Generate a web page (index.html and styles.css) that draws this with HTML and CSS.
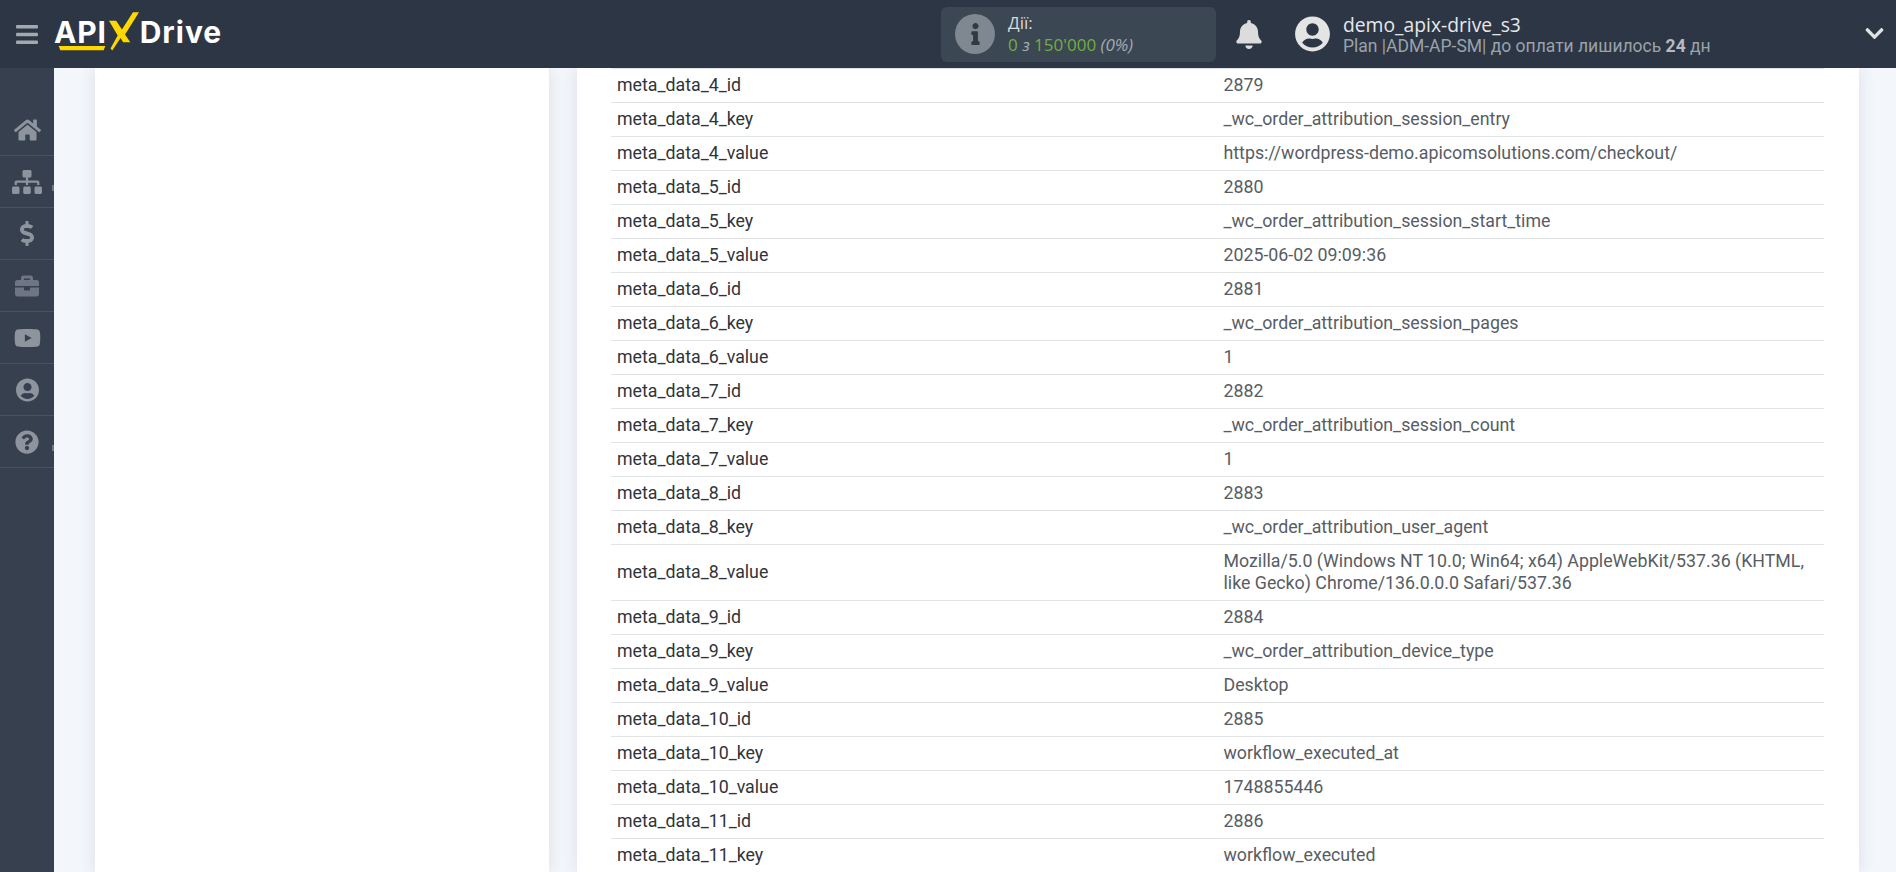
FILE: index.html
```html
<!DOCTYPE html>
<html lang="uk">
<head>
<meta charset="utf-8">
<title>ApiX-Drive</title>
<link rel="stylesheet" href="styles.css">
</head>
<body>
<header class="topbar">
  <button class="burger" aria-label="Меню"><svg viewBox="0 0 448 512"><path d="M16 132h416c8.837 0 16-7.163 16-16V76c0-8.837-7.163-16-16-16H16C7.163 60 0 67.163 0 76v40c0 8.837 7.163 16 16 16zm0 160h416c8.837 0 16-7.163 16-16v-40c0-8.837-7.163-16-16-16H16c-8.837 0-16 7.163-16 16v40c0 8.837 7.163 16 16 16zm0 160h416c8.837 0 16-7.163 16-16v-40c0-8.837-7.163-16-16-16H16c-8.837 0-16 7.163-16 16v40c0 8.837 7.163 16 16 16z"/></svg></button>
  <div class="logo">
    <span class="logo-api">API</span>
    <svg class="logo-x" viewBox="0 0 32 40"><path d="M1 9h7.4L14.4 18 25.8 0H32L17.6 23 23 31h-7.4L13 26.6 4.4 39.5 2.6 37.6 10 24z"/></svg>
    <span class="logo-drive">Drive</span>
    <svg class="logo-line" viewBox="0 0 56 6"><path d="M0 0h56l-2 5H2z"/></svg>
  </div>
  <div class="actions">
    <span class="actions-icon"><svg viewBox="0 0 192 512"><path d="M20 424.229h20V279.771H20c-11.046 0-20-8.954-20-20V212c0-11.046 8.954-20 20-20h112c11.046 0 20 8.954 20 20v212.229h20c11.046 0 20 8.954 20 20V492c0 11.046-8.954 20-20 20H20c-11.046 0-20-8.954-20-20v-47.771c0-11.046 8.954-20 20-20zM96 0C56.235 0 24 32.235 24 72s32.235 72 72 72 72-32.235 72-72S135.764 0 96 0z"/></svg></span>
    <div class="actions-text">
      <div class="actions-title">Дії:</div>
      <div class="actions-count"><span class="green">0</span> <i>з</i> <span class="green">150'000</span> <i>(0%)</i></div>
    </div>
  </div>
  <svg class="bell" viewBox="0 0 448 512"><path d="M224 512c35.32 0 63.97-28.65 63.97-64H160.03c0 35.35 28.65 64 63.97 64zm215.39-149.71c-19.32-20.76-55.47-51.99-55.47-154.29 0-77.7-54.48-139.9-127.94-155.16V32c0-17.67-14.32-32-31.98-32s-31.98 14.33-31.98 32v20.84C118.56 68.1 64.08 130.3 64.08 208c0 102.3-36.15 133.53-55.47 154.29-6 6.45-8.66 14.16-8.61 21.71.11 16.4 12.98 32 32.1 32h383.8c19.12 0 32-15.6 32.1-32 .05-7.55-2.61-15.27-8.61-21.71z"/></svg>
  <svg class="avatar" viewBox="0 0 496 512"><path d="M248 8C111 8 0 119 0 256s111 248 248 248 248-111 248-248S385 8 248 8zm0 96c48.6 0 88 39.4 88 88s-39.4 88-88 88-88-39.4-88-88 39.4-88 88-88zm0 344c-58.7 0-111.3-26.6-146.5-68.2 18.8-35.4 55.6-59.8 98.5-59.8 2.4 0 4.8.4 7.1 1.1 13 4.2 26.6 6.9 40.9 6.9 14.3 0 28-2.7 40.9-6.9 2.3-.7 4.7-1.1 7.1-1.1 42.9 0 79.7 24.4 98.5 59.8C359.3 421.4 306.7 448 248 448z"/></svg>
  <div class="user">
    <div class="user-name">demo_apix-drive_s3</div>
    <div class="user-plan">Plan |ADM-AP-SM| до оплати лишилось <b>24</b> дн</div>
  </div>
  <svg class="chevron" viewBox="0 0 448 512"><path d="M207.029 381.476L12.686 187.132c-9.373-9.373-9.373-24.569 0-33.941l22.667-22.667c9.357-9.357 24.522-9.375 33.901-.04L224 284.505l154.745-154.021c9.379-9.335 24.544-9.317 33.901.04l22.667 22.667c9.373 9.373 9.373 24.569 0 33.941L240.971 381.476c-9.373 9.372-24.569 9.372-33.942 0z"/></svg>
</header>
<div class="main">
  <nav class="sidebar">
    <a class="nav-item"><svg class="ic-home" viewBox="0 0 576 512"><path d="M280.37 148.26L96 300.11V464a16 16 0 0 0 16 16l112.06-.29a16 16 0 0 0 15.92-16V368a16 16 0 0 1 16-16h64a16 16 0 0 1 16 16v95.64a16 16 0 0 0 16 16.05L464 480a16 16 0 0 0 16-16V300L295.67 148.26a12.19 12.19 0 0 0-15.3 0zM571.6 251.47L488 182.56V44.05a12 12 0 0 0-12-12h-56a12 12 0 0 0-12 12v72.61L318.47 43a48 48 0 0 0-61 0L4.34 251.47a12 12 0 0 0-1.6 16.9l25.5 31A12 12 0 0 0 45.15 301l235.22-193.74a12.19 12.19 0 0 1 15.3 0L530.9 301a12 12 0 0 0 16.9-1.6l25.5-31a12 12 0 0 0-1.7-16.93z"/></svg></a>
    <a class="nav-item has-tick"><svg class="ic-site" viewBox="0 0 640 512"><path d="M128 352H32c-17.67 0-32 14.33-32 32v96c0 17.67 14.33 32 32 32h96c17.67 0 32-14.33 32-32v-96c0-17.67-14.33-32-32-32zm-24-80h192v48h48v-48h192v48h48v-57.59c0-21.17-17.23-38.41-38.41-38.41H344v-64h40c17.67 0 32-14.33 32-32V32c0-17.67-14.33-32-32-32H256c-17.67 0-32 14.33-32 32v96c0 17.67 14.33 32 32 32h40v64H94.41C73.23 224 56 241.23 56 262.41V320h48v-48zm264 80h-96c-17.67 0-32 14.33-32 32v96c0 17.67 14.33 32 32 32h96c17.67 0 32-14.33 32-32v-96c0-17.67-14.33-32-32-32zm240 0h-96c-17.67 0-32 14.33-32 32v96c0 17.67 14.33 32 32 32h96c17.67 0 32-14.33 32-32v-96c0-17.67-14.33-32-32-32z"/></svg></a>
    <a class="nav-item"><svg class="ic-dollar" viewBox="0 0 288 512"><path d="M209.2 233.4l-108-31.6C88.7 198.2 80 186.5 80 173.5c0-16.3 13.2-29.5 29.5-29.5h66.3c12.2 0 24.2 3.7 34.2 10.5 6.1 4.1 14.3 3.1 19.5-2l34.8-34c7.1-6.9 6.1-18.4-1.8-24.5C238 74.8 207.4 64.1 176 64V16c0-8.8-7.2-16-16-16h-32c-8.8 0-16 7.2-16 16v48h-2.5C45.8 64-5.4 118.7.5 183.6c4.2 46.1 39.4 83.6 83.8 96.6l102.5 30c12.5 3.7 21.2 15.3 21.2 28.3 0 16.3-13.2 29.5-29.5 29.5h-66.3C100 368 88 364.3 78 357.5c-6.1-4.1-14.3-3.1-19.5 2l-34.8 34c-7.1 6.9-6.1 18.4 1.8 24.5 24.5 19.2 55.1 29.9 86.5 30v48c0 8.8 7.2 16 16 16h32c8.8 0 16-7.2 16-16v-48.2c46.6-.9 90.3-28.6 105.7-72.7 21.5-61.6-14.6-124.8-72.5-141.7z"/></svg></a>
    <a class="nav-item dim"><svg class="ic-case" viewBox="0 0 512 512"><path d="M320 336c0 8.84-7.16 16-16 16h-96c-8.84 0-16-7.16-16-16v-48H0v144c0 25.6 22.4 48 48 48h416c25.6 0 48-22.4 48-48V288H320v48zm144-208h-80V80c0-25.6-22.4-48-48-48H176c-25.6 0-48 22.4-48 48v48H48c-25.6 0-48 22.4-48 48v80h512v-80c0-25.6-22.4-48-48-48zm-144 0H192V96h128v32z"/></svg></a>
    <a class="nav-item"><svg class="ic-yt" viewBox="0 0 576 512"><path d="M549.655 124.083c-6.281-23.65-24.787-42.276-48.284-48.597C458.781 64 288 64 288 64S117.22 64 74.629 75.486c-23.497 6.322-42.003 24.947-48.284 48.597-11.412 42.867-11.412 132.305-11.412 132.305s0 89.438 11.412 132.305c6.281 23.65 24.787 41.5 48.284 47.821C117.22 448 288 448 288 448s170.78 0 213.371-11.486c23.497-6.321 42.003-24.171 48.284-47.821 11.412-42.867 11.412-132.305 11.412-132.305s0-89.438-11.412-132.305zm-317.51 213.508V175.185l142.739 81.205-142.739 81.201z"/></svg></a>
    <a class="nav-item"><svg class="ic-user" viewBox="0 0 496 512"><path d="M248 8C111 8 0 119 0 256s111 248 248 248 248-111 248-248S385 8 248 8zm0 96c48.6 0 88 39.4 88 88s-39.4 88-88 88-88-39.4-88-88 39.4-88 88-88zm0 344c-58.7 0-111.3-26.6-146.5-68.2 18.8-35.4 55.6-59.8 98.5-59.8 2.4 0 4.8.4 7.1 1.1 13 4.2 26.6 6.9 40.9 6.9 14.3 0 28-2.7 40.9-6.9 2.3-.7 4.7-1.1 7.1-1.1 42.9 0 79.7 24.4 98.5 59.8C359.3 421.4 306.7 448 248 448z"/></svg></a>
    <a class="nav-item has-tick"><svg class="ic-help" viewBox="0 0 512 512"><path d="M504 256c0 136.997-111.043 248-248 248S8 392.997 8 256C8 119.083 119.043 8 256 8s248 111.083 248 248zM262.655 90c-54.497 0-89.255 22.957-116.549 63.758-3.536 5.286-2.353 12.415 2.715 16.258l34.699 26.31c5.205 3.947 12.621 3.008 16.665-2.122 17.864-22.658 30.113-35.797 57.303-35.797 20.429 0 45.698 13.148 45.698 32.958 0 14.976-12.363 22.667-32.534 33.976C247.128 238.528 216 254.941 216 296v4c0 6.627 5.373 12 12 12h56c6.627 0 12-5.373 12-12v-1.333c0-28.462 83.186-29.647 83.186-106.667 0-58.002-60.165-102-116.531-102zM256 338c-25.365 0-46 20.635-46 46 0 25.364 20.635 46 46 46s46-20.636 46-46c0-25.365-20.635-46-46-46z"/></svg></a>
  </nav>
  <div class="content">
    <section class="card card-left"></section>
    <section class="card card-right">
      <table class="data">
        <tr><td>meta_data_4_id</td><td>2879</td></tr>
        <tr><td>meta_data_4_key</td><td>_wc_order_attribution_session_entry</td></tr>
        <tr><td>meta_data_4_value</td><td>https://wordpress-demo.apicomsolutions.com/checkout/</td></tr>
        <tr><td>meta_data_5_id</td><td>2880</td></tr>
        <tr><td>meta_data_5_key</td><td>_wc_order_attribution_session_start_time</td></tr>
        <tr><td>meta_data_5_value</td><td>2025-06-02 09:09:36</td></tr>
        <tr><td>meta_data_6_id</td><td>2881</td></tr>
        <tr><td>meta_data_6_key</td><td>_wc_order_attribution_session_pages</td></tr>
        <tr><td>meta_data_6_value</td><td>1</td></tr>
        <tr><td>meta_data_7_id</td><td>2882</td></tr>
        <tr><td>meta_data_7_key</td><td>_wc_order_attribution_session_count</td></tr>
        <tr><td>meta_data_7_value</td><td>1</td></tr>
        <tr><td>meta_data_8_id</td><td>2883</td></tr>
        <tr><td>meta_data_8_key</td><td>_wc_order_attribution_user_agent</td></tr>
        <tr><td>meta_data_8_value</td><td>Mozilla/5.0 (Windows NT 10.0; Win64; x64) AppleWebKit/537.36 (KHTML, like Gecko) Chrome/136.0.0.0 Safari/537.36</td></tr>
        <tr><td>meta_data_9_id</td><td>2884</td></tr>
        <tr><td>meta_data_9_key</td><td>_wc_order_attribution_device_type</td></tr>
        <tr><td>meta_data_9_value</td><td>Desktop</td></tr>
        <tr><td>meta_data_10_id</td><td>2885</td></tr>
        <tr><td>meta_data_10_key</td><td>workflow_executed_at</td></tr>
        <tr><td>meta_data_10_value</td><td>1748855446</td></tr>
        <tr><td>meta_data_11_id</td><td>2886</td></tr>
        <tr><td>meta_data_11_key</td><td>workflow_executed</td></tr>
      </table>
    </section>
  </div>
</div>
</body>
</html>
```
FILE: styles.css
```css
* { box-sizing: border-box; }
html, body { height: 100%; }
body {
  margin: 0;
  display: flex;
  flex-direction: column;
  overflow: hidden;
  background: #f3f6fb;
  font-family: Roboto, "Liberation Sans", sans-serif;
}
svg { display: block; fill: currentColor; }

.topbar {
  flex: 0 0 68px;
  display: flex;
  align-items: center;
  background: #2c3644;
  position: relative;
  z-index: 2;
}
.burger {
  flex: 0 0 auto;
  width: 54px;
  height: 68px;
  padding: 0 16px;
  border: 0;
  background: none;
  color: #a4a9ae;
}
.burger svg { width: 22px; height: 25px; }

.logo {
  position: relative;
  display: flex;
  align-items: flex-start;
  width: 176px;
  height: 52px;
  color: #fff;
  font-family: Inter, "Open Sans", sans-serif;
  font-weight: 700;
  font-size: 30px;
  line-height: 32px;
  padding-top: 8px;
}
.logo-api { letter-spacing: 0.8px; }
.logo-x {
  width: 31px;
  height: 39px;
  margin: -4px 1px 0 1px;
  color: #ffd800;
  flex: 0 0 auto;
}
.logo-drive { letter-spacing: 1px; }
.logo-line {
  position: absolute;
  left: 0;
  top: 38px;
  width: 56px;
  height: 5px;
  color: #ffd800;
}

.actions {
  margin-left: 711px;
  width: 275px;
  height: 55px;
  display: flex;
  align-items: center;
  background: #3b4752;
  border-radius: 6px;
  padding-left: 14px;
}
.actions-icon {
  width: 40px;
  height: 40px;
  border-radius: 50%;
  background: #7f8790;
  color: #2f3a46;
  display: flex;
  align-items: center;
  justify-content: center;
  flex: 0 0 auto;
}
.actions-icon svg { width: 9px; height: 22px; }
.actions-text {
  margin-left: 13px;
  font-family: "Open Sans", sans-serif;
  font-size: 17px;
  line-height: 22px;
  color: #d6dadd;
}
.actions-count { color: #a3abb3; }
.actions-count i { font-style: italic; }
.green { color: #74ad42; }

.bell {
  width: 26px;
  height: 29px;
  margin-left: 20px;
  color: #dcdcdc;
  flex: 0 0 auto;
}
.avatar {
  width: 35px;
  height: 36px;
  margin-left: 33px;
  color: #e4e4e4;
  flex: 0 0 auto;
}
.user { margin-left: 13px; white-space: nowrap; }
.user-name {
  font-family: "Open Sans", sans-serif;
  font-size: 19.3px;
  line-height: 23px;
  color: #e6e8ea;
}
.user-plan {
  font-size: 17.5px;
  line-height: 20px;
  color: #9aa3ab;
}
.user-plan b { color: #b5bbc1; }
.chevron {
  position: absolute;
  right: 12px;
  top: 23px;
  width: 19px;
  height: 21px;
  color: #dfe1e3;
}

.main {
  flex: 1 1 auto;
  min-height: 0;
  display: flex;
}
.sidebar {
  flex: 0 0 54px;
  background: #36404f;
  padding-top: 36px;
  position: relative;
  z-index: 1;
}
.nav-item {
  position: relative;
  height: 52px;
  display: flex;
  align-items: center;
  justify-content: center;
  color: #8d949e;
  border-bottom: 1px solid #4a5361;
}
.nav-item.dim { color: #6e7683; }
.has-tick::after {
  content: "";
  position: absolute;
  right: 0;
  top: 29px;
  width: 2px;
  height: 6px;
  background: #6e7683;
}
.ic-home { width: 27px; height: 24px; }
.ic-site { width: 30px; height: 24px; }
.ic-dollar { width: 14px; height: 25px; }
.ic-case { width: 24px; height: 24px; }
.ic-yt { width: 27px; height: 24px; }
.ic-user { width: 23px; height: 24px; }
.ic-help { width: 24px; height: 24px; }

.content {
  flex: 1 1 auto;
  min-width: 0;
  display: flex;
  padding: 0 37px 0 41px;
  gap: 28px;
}
.card {
  background: #fff;
  box-shadow: 0 0 16px rgba(60, 70, 90, 0.12);
}
.card-left { flex: 0 0 454px; }
.card-right {
  flex: 1 1 auto;
  min-width: 0;
  padding: 0 35px 0 34px;
  overflow: hidden;
}
.data {
  width: 100%;
  border-collapse: collapse;
  table-layout: fixed;
  font-size: 17.78px;
  line-height: 22px;
}
.data tr { border-top: 1px solid #e2e3e5; }
.data td {
  padding: 5px 6px 6px;
  color: #575d63;
  vertical-align: middle;
}
.data td:first-child {
  width: 606.5px;
  color: #30343a;
}
```
